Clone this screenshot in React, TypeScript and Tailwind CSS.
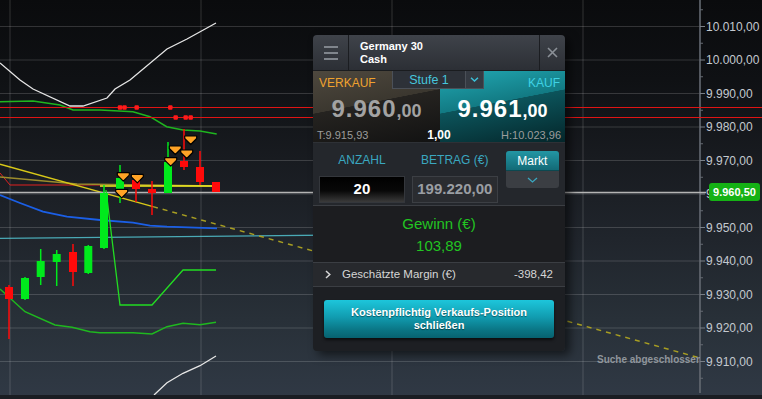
import React from "react";

const candles = [
  { cx: 9, t: 287, b: 299, wt: 285, wb: 339, up: false },
  { cx: 25, t: 278, b: 299, wt: 277, wb: 300, up: true },
  { cx: 40.7, t: 261, b: 277, wt: 249, wb: 285, up: true },
  { cx: 56.7, t: 254, b: 262, wt: 250, wb: 286, up: true },
  { cx: 73, t: 252, b: 272, wt: 244, wb: 286, up: false },
  { cx: 88.3, t: 246, b: 273, wt: 245, wb: 274, up: true },
  { cx: 104, t: 193, b: 248, wt: 185, wb: 249, up: true },
  { cx: 120, t: 178, b: 191, wt: 165, wb: 203, up: true },
  { cx: 136, t: 180, b: 189, wt: 174, wb: 202, up: false },
  { cx: 152, t: 189, b: 193, wt: 181, wb: 215, up: false },
  { cx: 168, t: 162, b: 193, wt: 142, wb: 193, up: true },
  { cx: 184, t: 161, b: 167, wt: 129, wb: 170, up: false },
  { cx: 200, t: 167, b: 182, wt: 151, wb: 185, up: false },
  { cx: 216, t: 182, b: 192, wt: 182, wb: 192, up: false },
];

const markers: [number, number][] = [
  [123.3, 176.7],
  [137.3, 178.3],
  [121.7, 193.3],
  [170.7, 161.7],
  [175.3, 150],
  [186.7, 154],
  [190.7, 140],
];

const dots: [number, number][] = [
  [120, 107.5],
  [124.5, 107.5],
  [136.7, 107.5],
  [170.3, 107.5],
  [175.7, 117.5],
  [185.7, 117.5],
  [190.7, 117.5],
];

const gridY = [26.5, 60, 93.5, 127, 160.5, 194, 227.5, 261, 294.5, 328, 361.5];
const gridX = [10, 201, 392, 583];

function ChartSvg() {
  return (
    <svg
      className="absolute left-0 top-0"
      width={762}
      height={395}
      viewBox="0 0 762 395"
    >
      {gridY.map((y) => (
        <line key={"h" + y} x1={0} x2={700} y1={y} y2={y} stroke="rgba(255,255,255,0.16)" strokeWidth={1} />
      ))}
      {gridX.map((x) => (
        <line key={"v" + x} x1={x} x2={x} y1={0} y2={395} stroke="rgba(255,255,255,0.16)" strokeWidth={1} />
      ))}
      {/* axis */}
      <line x1={700} x2={700} y1={0} y2={393} stroke="#646a72" strokeWidth={1.6} />
      {gridY.map((y) => (
        <line key={"t" + y} x1={700} x2={705} y1={y} y2={y} stroke="#7a8088" strokeWidth={1} />
      ))}
      {gridY.map((y) => (
        <line key={"m" + y} x1={700} x2={703} y1={y - 16.75} y2={y - 16.75} stroke="#646a72" strokeWidth={1} />
      ))}
      <line x1={700} x2={703} y1={378.25} y2={378.25} stroke="#646a72" strokeWidth={1} />

      {/* upper white band */}
      <polyline
        points="0,63 20,80 33,89 70,106 83,106 107,98 115,89 130,80 167,49 187,39 216,23"
        fill="none" stroke="#e6e6e6" strokeWidth={1.3}
      />
      {/* upper green */}
      <polyline
        points="0,101.7 33,101 60,105 73,110 100,110 133,111.7 150,116.7 166.7,126.7 183,130 200,131 216.7,134"
        fill="none" stroke="#1fb51f" strokeWidth={1.5}
      />
      {/* red horizontals */}
      <line x1={0} x2={762} y1={107.5} y2={107.5} stroke="#e01414" strokeWidth={1.2} />
      <line x1={0} x2={762} y1={117.5} y2={117.5} stroke="#e01414" strokeWidth={1.2} />
      {dots.map(([x, y], i) => (
        <rect key={"d" + i} x={x - 2.2} y={y - 2.2} width={4.4} height={4.4} rx={1} fill="#ff1a1a" />
      ))}
      {/* cyan */}
      <line x1={0} y1={238.3} x2={440} y2={234} stroke="#52c2cf" strokeWidth={1.3} opacity={0.85} />
      {/* blue */}
      <polyline
        points="0,195 20,203 43,211.7 67,216.7 100,220 133,222.7 150,225.7 167,226.7 217,228.3"
        fill="none" stroke="#1b5fe6" strokeWidth={1.8}
      />
      {/* red thin + olive + yellow */}
      <polyline points="0,173 10,185 100,185" fill="none" stroke="#e02020" strokeWidth={1} />
      <polyline points="0,177 77,184 217,186" fill="none" stroke="#9c8c2c" strokeWidth={1.5} />
      <line x1={100} y1={186} x2={217} y2={186} stroke="#f4f020" strokeWidth={1.4} />
      <line x1={0} y1={164.3} x2={153} y2={206.6} stroke="#d8c818" strokeWidth={1.5} />
      <line x1={153} y1={206.6} x2={700} y2={358} stroke="#a89e22" strokeWidth={1.5} strokeDasharray="5 5" />
      {/* price line */}
      <line x1={0} x2={706} y1={192.5} y2={192.5} stroke="#b4b4b4" strokeWidth={1.5} />
      {/* step green */}
      <polyline points="106,190 120,305 152,305 183,270 216,270" fill="none" stroke="#22dd22" strokeWidth={1.3} />
      {/* lower green */}
      <polyline
        points="0,289 25,311.7 55,325 72,327.3 90,331.7 100,332.7 133,332.7 152,334 167,326.7 183,323.3 200,324.7 216,322.3"
        fill="none" stroke="#1fb81f" strokeWidth={1.5}
      />
      {/* lower white */}
      <polyline points="154,395 167,382.7 183,373.3 200,365.7 216,356" fill="none" stroke="#e6e6e6" strokeWidth={1.3} />

      {/* candles */}
      {candles.map((c, i) => {
        const col = c.up ? "#00ea1c" : "#ff0a0a";
        return (
          <g key={"c" + i}>
            <line x1={c.cx} x2={c.cx} y1={c.wt} y2={c.wb} stroke={col} strokeWidth={1.5} />
            <rect x={c.cx - 4} y={c.t} width={8} height={Math.max(c.b - c.t, 2)} fill={col} />
          </g>
        );
      })}
      {/* markers */}
      {markers.map(([x, y], i) => (
        <path
          key={"mk" + i}
          d={`M${x - 6},${y - 4} L${x + 6},${y - 4} L${x + 6},${y - 1.5} L${x},${y + 4.5} L${x - 6},${y - 1.5} Z`}
          fill="#ffa326"
          stroke="#000"
          strokeWidth={1.2}
          strokeLinejoin="round"
        />
      ))}
    </svg>
  );
}

const labels = [
  "10.010,00",
  "10.000,00",
  "9.990,00",
  "9.980,00",
  "9.970,00",
  "9.960,00",
  "9.950,00",
  "9.940,00",
  "9.930,00",
  "9.920,00",
  "9.910,00",
];

function Axis() {
  return (
    <div className="relative w-[62px] h-full flex flex-col pt-[9.75px] pl-[6px]">
      {labels.map((l) => (
        <div key={l} className="h-[33.5px] flex items-center text-[12px] leading-[14px] text-[#c4c9cf] whitespace-nowrap">
          {l}
        </div>
      ))}
      <div className="absolute left-[9px] top-[183px] w-[51px] h-[18px] rounded-[3px] bg-[#15b215] flex items-center justify-center text-white font-bold text-[11px] leading-[12px]">
        9.960,50
      </div>
    </div>
  );
}

function Panel() {
  return (
    <div className="absolute left-[313px] top-[35px] w-[252px] flex flex-col rounded-[4px] overflow-hidden shadow-[5px_4px_10px_rgba(0,0,0,0.55)]">
      {/* header */}
      <div className="h-[36px] flex bg-[linear-gradient(180deg,#3f434a_0%,#2c2f35_100%)] border-b border-[#1a1c1f]">
        <div className="w-[36px] flex flex-col items-center justify-center gap-[4px] border-r border-[#1b1d21]">
          <div className="w-[14px] h-[2px] bg-[#80858c]" />
          <div className="w-[14px] h-[2px] bg-[#80858c]" />
          <div className="w-[14px] h-[2px] bg-[#80858c]" />
        </div>
        <div className="flex-1 pl-[11px] flex flex-col justify-center text-white font-bold text-[11px] leading-[13px]">
          <span>Germany 30</span>
          <span>Cash</span>
        </div>
        <div className="w-[26px] flex items-center justify-center border-l border-[#1b1d21]">
          <svg width="11" height="11" viewBox="0 0 11 11">
            <path d="M1,1 L10,10 M10,1 L1,10" stroke="#8b9097" strokeWidth="1.6" />
          </svg>
        </div>
      </div>
      {/* prices */}
      <div className="h-[71px] flex flex-col [background:linear-gradient(169deg,#4e483e_0%,#3b372f_44.5%,#252320_45%,#121212_100%)_left/127px_100%_no-repeat,linear-gradient(169deg,#22a8b3_0%,#127a83_44.5%,#0c545b_45%,#04262a_100%)_right/125px_100%_no-repeat]">
        <div className="h-[19px] flex">
          <div className="w-[79px] pl-[6px] pt-[5px] text-[12px] leading-[14px] text-[#f0a22e]">VERKAUF</div>
          <div className="w-[92px] h-[18px] flex bg-[#2d3138] border border-t-0 border-[#4b5058]">
            <div className="flex-1 flex items-center justify-center text-[12.5px] leading-[14px] text-[#46c6dc]">Stufe 1</div>
            <div className="w-[18px] flex items-center justify-center border-l border-[#4b5058] bg-[#353a42]">
              <svg width="9" height="5" viewBox="0 0 9 5">
                <path d="M1,0.8 L4.5,4 L8,0.8" fill="none" stroke="#3cc0d8" strokeWidth="1.5" />
              </svg>
            </div>
          </div>
          <div className="flex-1 pr-[5px] pt-[5px] text-right text-[12px] leading-[14px] text-[#3fd2e4]">KAUF</div>
        </div>
        <div className="h-[28px] mt-[5px] flex font-bold">
          <div className="w-[127px] flex justify-center items-baseline text-[#a3a3a3]">
            <span className="text-[24px] leading-[28px] tracking-[1px]">9.960</span>
            <span className="text-[18px] leading-[28px]">,00</span>
          </div>
          <div className="flex-1 flex justify-center items-baseline text-white">
            <span className="text-[24px] leading-[28px] tracking-[1px]">9.961</span>
            <span className="text-[18px] leading-[28px]">,00</span>
          </div>
        </div>
        <div className="h-[13px] mt-[6px] grid grid-cols-3 px-[4px] items-center text-[11px] leading-[13px]">
          <span className="text-left text-[#9c9c9c]">T:9.915,93</span>
          <span className="text-center text-white font-bold text-[12px]">1,00</span>
          <span className="text-right text-[#9c9c9c]">H:10.023,96</span>
        </div>
      </div>
      {/* inputs */}
      <div className="h-[63px] flex px-[6px] pt-[8px] bg-[#24272c] border-t border-[#2e3136]">
        <div className="w-[87px] flex flex-col">
          <div className="h-[18px] flex items-center justify-center text-[12px] text-[#3aa7c0]">ANZAHL</div>
          <div className="h-[27px] mt-[7px] flex items-center justify-center text-white font-bold text-[15px] border border-[#34373c] bg-[linear-gradient(180deg,#000_0%,#080808_55%,#3a3a3a_100%)]">
            20
          </div>
        </div>
        <div className="w-[87px] ml-[7px] flex flex-col">
          <div className="h-[18px] flex items-center justify-center text-[12px] text-[#3aa7c0] whitespace-nowrap">BETRAG (€)</div>
          <div className="h-[27px] mt-[7px] flex items-center justify-center text-[#9a9ea3] font-bold text-[15px] border border-[#3c3f44] bg-[#2a2c30]">
            199.220,00
          </div>
        </div>
        <div className="w-[54px] ml-[8px] flex flex-col">
          <div className="h-[20px] rounded-t-[3px] flex items-center justify-center text-white text-[12px] bg-[linear-gradient(180deg,#2396a4_0%,#136a76_100%)] border-b border-[#0c4850]">
            Markt
          </div>
          <div className="h-[17px] rounded-b-[3px] flex items-center justify-center bg-[#3b3e43]">
            <svg width="11" height="6" viewBox="0 0 11 6">
              <path d="M1,1 L5.5,5 L10,1" fill="none" stroke="#3aa7c0" strokeWidth="1.3" />
            </svg>
          </div>
        </div>
      </div>
      {/* gewinn */}
      <div className="h-[57px] flex flex-col items-center pt-[9px] gap-[4px] bg-[#1c1d20] border-t border-[#3b3e43]">
        <span className="text-[15px] leading-[18px] text-[#22c422]">Gewinn (€)</span>
        <span className="text-[15px] leading-[18px] text-[#22c422]">103,89</span>
      </div>
      {/* margin */}
      <div className="h-[25px] flex items-center pl-[12px] pr-[12px] bg-[#27292d] border-t border-b border-[#3b3e43] text-[11.5px] text-[#d6d6d6]">
        <svg width="6" height="9" viewBox="0 0 6 9" className="mr-[11px]">
          <path d="M1,1 L4.8,4.5 L1,8" fill="none" stroke="#d6d6d6" strokeWidth="1.5" />
        </svg>
        <span className="flex-1">Geschätzte Margin (€)</span>
        <span>-398,42</span>
      </div>
      {/* button */}
      <div className="h-[64px] px-[11px] pt-[13px] bg-[#1d1f23]">
        <div className="h-[38px] rounded-[3px] flex flex-col items-center justify-center text-white font-bold text-[11px] leading-[13px] bg-[linear-gradient(180deg,#1dc6db_0%,#119cb0_45%,#0a7483_80%,#076270_100%)] shadow-[0_2px_3px_rgba(0,0,0,0.6)] [text-shadow:0_1px_1px_rgba(0,0,0,0.45)]">
          <span>Kostenpflichtig Verkaufs-Position</span>
          <span>schließen</span>
        </div>
      </div>
    </div>
  );
}

export default function App() {
  return (
    <div className="relative w-[762px] h-[399px] overflow-hidden bg-[linear-gradient(180deg,#0a0b0d_0%,#0f1114_20%,#181b20_40%,#20252c_60%,#283038_80%,#303945_100%)] font-['Liberation_Sans',Arial,sans-serif]">
      <ChartSvg />
      <div className="relative flex h-[395px]">
        <div className="relative w-[700px] h-full overflow-hidden">
          <Panel />
          <div className="absolute left-[597px] top-[354px] text-[10px] leading-[12px] font-bold text-[#8f959c] whitespace-nowrap">
            Suche abgeschlossen
          </div>
        </div>
        <Axis />
      </div>
      <div className="h-[4px] bg-[#1a1d22]" />
    </div>
  );
}
